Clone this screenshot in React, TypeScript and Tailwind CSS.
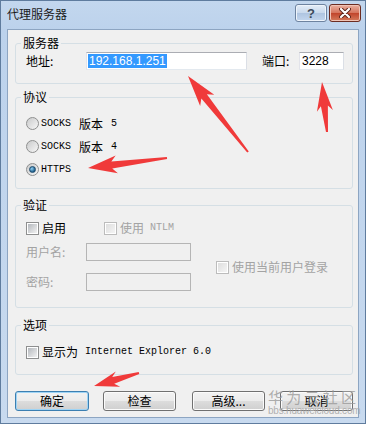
import React from "react";

type Pt = [number, number];

// red annotation arrow from tail to tip
function arrowPoints(tail: Pt, tip: Pt, head = 24, hw = 9, sw = 3.5, tw = 1) {
  const [tx, ty] = tail;
  const [hx, hy] = tip;
  const len = Math.hypot(hx - tx, hy - ty);
  const ux = (hx - tx) / len;
  const uy = (hy - ty) / len;
  const nx = -uy;
  const ny = ux;
  const bx = hx - ux * head;
  const by = hy - uy * head;
  const pts: Pt[] = [
    [tx + nx * tw, ty + ny * tw],
    [bx + nx * sw, by + ny * sw],
    [bx - ux * 5 + nx * hw, by - uy * 5 + ny * hw],
    [hx, hy],
    [bx - ux * 5 - nx * hw, by - uy * 5 - ny * hw],
    [bx - nx * sw, by - ny * sw],
    [tx - nx * tw, ty - ny * tw],
  ];
  return pts.map((p) => p.join(",")).join(" ");
}

function Radio({ checked }: { checked?: boolean }) {
  return (
    <span className="w-[13px] h-[13px] shrink-0 rounded-full border border-[#8e8f8f] bg-[linear-gradient(135deg,#c9cacb,#f7f7f7)] flex items-center justify-center">
      {checked && (
        <span className="w-[7px] h-[7px] rounded-full border border-[#1b4a6d] bg-[radial-gradient(circle_at_35%_35%,#8fd0f5,#1f5f8b_70%)]" />
      )}
    </span>
  );
}

function Check({ disabled }: { disabled?: boolean }) {
  return (
    <span
      className={
        disabled
          ? "w-[13px] h-[13px] shrink-0 border border-[#bcbcbc] bg-white p-[1px] flex"
          : "w-[13px] h-[13px] shrink-0 border border-[#8e8f8f] bg-white p-[1px] flex"
      }
    >
      <span
        className={
          disabled
            ? "flex-1 bg-[linear-gradient(135deg,#dedede,#f4f4f4)]"
            : "flex-1 bg-[linear-gradient(135deg,#b4b8bd,#f2f2f2)]"
        }
      />
    </span>
  );
}

function Button({ label, primary }: { label: string; primary?: boolean }) {
  return (
    <button
      className={
        primary
          ? "w-[74px] h-[20px] rounded-[3px] border border-[#3c7fb1] bg-[linear-gradient(#f2f2f2_0%,#ebebeb_50%,#dddddd_50%,#cfcfcf_100%)] shadow-[inset_0_0_0_1px_#9fd4f5] text-[12px] leading-[14px] text-black"
          : "w-[73px] h-[20px] rounded-[3px] border border-[#707070] bg-[linear-gradient(#f2f2f2_0%,#ebebeb_50%,#dddddd_50%,#cfcfcf_100%)] shadow-[inset_0_0_0_1px_#fbfbfb] text-[12px] leading-[14px] text-black"
      }
    >
      {label}
    </button>
  );
}

export default function App() {
  return (
    <div className="relative w-[366px] h-[424px] border border-[#5f7c9e] bg-[linear-gradient(#c3d7ee,#bcd2ec_30px,#c8daef)] flex flex-col font-['Noto_Sans_CJK_SC','Noto_Sans',sans-serif] text-[12px] leading-[14px] text-black overflow-hidden">
      {/* title bar */}
      <div className="h-[28px] shrink-0 flex items-start">
        <span className="ml-[6px] mt-[6px] text-[#1b1b1b]">代理服务器</span>
        <div className="ml-auto mt-[3px] mr-[4px] flex gap-[2px]">
          <div className="w-[32px] h-[18px] rounded-[3px] border border-[#6d83a0] bg-[linear-gradient(#e4edf8_0%,#c8d8ec_50%,#aec4e0_50%,#c3d6ee_100%)] shadow-[inset_0_0_0_1px_#eef4fb] flex items-center justify-center text-[13px] font-bold leading-none text-[#3d4a5a] font-['Liberation_Sans',sans-serif]">
            ?
          </div>
          <div className="w-[32px] h-[18px] rounded-[3px] border border-[#6b2c22] bg-[linear-gradient(#eab0a1_0%,#d5735b_50%,#c0432a_50%,#d57c5d_100%)] shadow-[inset_0_0_0_1px_#f0c4b6] flex items-center justify-center">
            <svg width="12" height="10" viewBox="0 0 12 10">
              <path d="M2 1 L10 9 M10 1 L2 9" stroke="#5a2016" strokeWidth="4" strokeLinecap="round" />
              <path d="M2 1 L10 9 M10 1 L2 9" stroke="#ffffff" strokeWidth="2.2" strokeLinecap="round" />
            </svg>
          </div>
        </div>
      </div>

      {/* client area */}
      <div className="mx-[6px] mb-[5px] flex-1 border border-[#8da5c2] bg-[#f0f0f0] flex flex-col pl-[7px] pr-[5px] pt-[6px]">
        <fieldset className="border border-[#d5dfe5] rounded-[3px]">
          <legend className="ml-[5px] px-[2px]">服务器</legend>
          <div className="flex items-center pl-[10px] pt-[2px] pb-[13px]">
            <span className="w-[60px]">地址:</span>
            <div className="w-[161px] h-[18px] border border-[#abadb3] border-b-[#e3e9ef] border-l-[#e2e3ea] border-r-[#dbdfe6] bg-white flex items-center pl-[1px]">
              <span className="bg-[#3399ff] text-white font-['Liberation_Sans',sans-serif] text-[12px] leading-[14px] px-[1px]">
                192.168.1.251
              </span>
            </div>
            <span className="ml-[15px] w-[37px]">端口:</span>
            <div className="w-[45px] h-[18px] border border-[#abadb3] border-b-[#e3e9ef] border-l-[#e2e3ea] border-r-[#dbdfe6] bg-white flex items-center pl-[2px] font-['Liberation_Sans',sans-serif]">
              3228
            </div>
          </div>
        </fieldset>

        <fieldset className="mt-[6px] border border-[#d5dfe5] rounded-[3px]">
          <legend className="ml-[5px] px-[2px]">协议</legend>
          <div className="flex flex-col pl-[10px] pt-[8px] pb-[7px]">
            <div className="h-[23px] flex items-center gap-[2px]">
              <Radio />
              <span className="font-['Liberation_Mono','Noto_Sans_CJK_SC',monospace] text-[10px]">SOCKS</span>
              <span className="ml-[6px]">版本</span>
              <span className="ml-[6px] font-['Liberation_Mono',monospace] text-[10px]">5</span>
            </div>
            <div className="h-[23px] flex items-center gap-[2px]">
              <Radio />
              <span className="font-['Liberation_Mono','Noto_Sans_CJK_SC',monospace] text-[10px]">SOCKS</span>
              <span className="ml-[6px]">版本</span>
              <span className="ml-[6px] font-['Liberation_Mono',monospace] text-[10px]">4</span>
            </div>
            <div className="h-[23px] flex items-center gap-[2px]">
              <Radio checked />
              <span className="font-['Liberation_Mono',monospace] text-[10px]">HTTPS</span>
            </div>
          </div>
        </fieldset>

        <fieldset className="mt-[9px] border border-[#d5dfe5] rounded-[3px]">
          <legend className="ml-[5px] px-[2px]">验证</legend>
          <div className="flex flex-col pl-[10px] pt-[7px] pb-[16px]">
            <div className="h-[18px] flex items-center">
              <div className="w-[78px] flex items-center gap-[3px]">
                <Check />
                <span>启用</span>
              </div>
              <div className="flex items-center gap-[3px] text-[#a3a3a3]">
                <Check disabled />
                <span>使用</span>
                <span className="ml-[3px] font-['Liberation_Mono',monospace] text-[10px]">NTLM</span>
              </div>
            </div>
            <div className="mt-[6px] flex items-center">
              <div className="flex flex-col gap-[12px] text-[#a3a3a3]">
                <div className="h-[18px] flex items-center">
                  <span className="w-[60px]">用户名:</span>
                  <div className="w-[105px] h-[18px] border border-[#b5b5b5] bg-[#f0f0f0]" />
                </div>
                <div className="h-[18px] flex items-center">
                  <span className="w-[60px]">密码:</span>
                  <div className="w-[105px] h-[18px] border border-[#b5b5b5] bg-[#f0f0f0]" />
                </div>
              </div>
              <div className="ml-[25px] flex items-center gap-[3px] text-[#a3a3a3]">
                <Check disabled />
                <span>使用当前用户登录</span>
              </div>
            </div>
          </div>
        </fieldset>

        <fieldset className="mt-[10px] border border-[#d5dfe5] rounded-[3px]">
          <legend className="ml-[5px] px-[2px]">选项</legend>
          <div className="flex items-center gap-[3px] pl-[10px] pt-[11px] pb-[13px] h-[42px]">
            <Check />
            <span>显示为</span>
            <span className="ml-[4px] font-['Liberation_Mono',monospace] text-[10px]">Internet Explorer 6.0</span>
          </div>
        </fieldset>

        <div className="mt-[16px] flex">
          <Button label="确定" primary />
          <div className="ml-[14px]">
            <Button label="检查" />
          </div>
          <div className="ml-[16px]">
            <Button label="高级..." />
          </div>
          <div className="ml-[15px]">
            <Button label="取消" />
          </div>
        </div>
      </div>

      {/* watermark */}
      <div className="absolute left-[267px] top-[388px] w-[88px] flex flex-col items-stretch pointer-events-none">
        <div className="flex justify-between text-[15px] leading-[16px] text-[#9a9a9a]/80">
          <span>华</span>
          <span>为</span>
          <span>云</span>
          <span>社</span>
          <span>区</span>
        </div>
        <div className="text-[10px] leading-[11px] text-[#a8a8a8]/90 font-['Liberation_Sans',sans-serif] tracking-[-0.2px]">
          bbs.huaweicloud.com
        </div>
      </div>

      {/* red arrows */}
      <svg className="absolute left-0 top-0 pointer-events-none" width="366" height="424" viewBox="-1 -1 366 424">
        <polygon points={arrowPoints([246, 150], [186, 74], 26, 9)} fill="#f03a3a" />
        <polygon points={arrowPoints([325, 130], [320, 80], 24, 8)} fill="#f03a3a" />
        <polygon points={arrowPoints([165, 156], [86, 166], 24, 9)} fill="#f03a3a" />
        <polygon points={arrowPoints([137, 371], [92, 384], 20, 8)} fill="#f03a3a" />
      </svg>
    </div>
  );
}
